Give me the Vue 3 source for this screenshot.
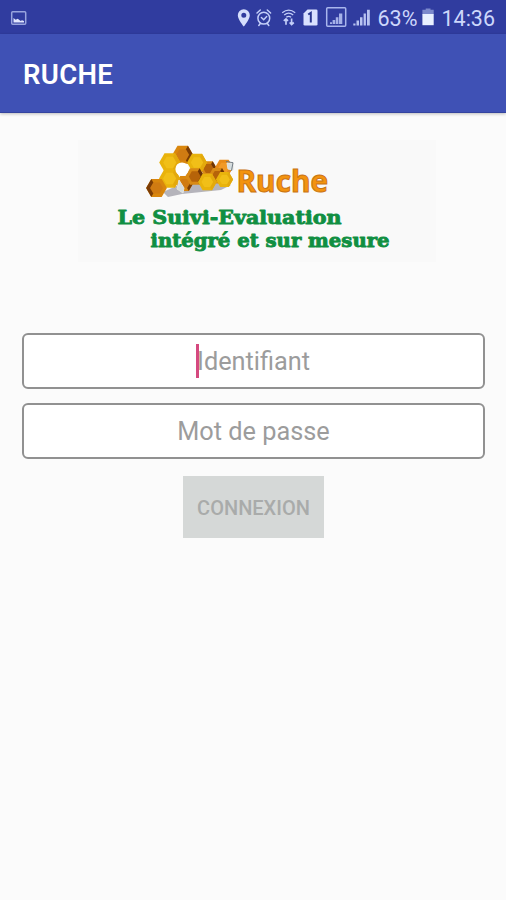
<script setup>
const cells = [
  { x: 208.5, y: 168.5, r: 8.4, tone: 'brown' },
  { x: 182.7, y: 154.8, r: 10.4, tone: 'amber' },
  { x: 197, y: 162.5, r: 10, tone: 'gold' },
  { x: 184.5, y: 183.5, r: 8.6, tone: 'amber' },
  { x: 194.8, y: 176.5, r: 9.6, tone: 'brown' },
  { x: 169.8, y: 162.5, r: 10.6, tone: 'gold' },
  { x: 169.6, y: 178.5, r: 10.6, tone: 'gold' },
  { x: 156.5, y: 188, r: 10.4, tone: 'amber' },
  { x: 224, y: 167.5, r: 9, tone: 'orange' },
  { x: 217.5, y: 175.8, r: 9, tone: 'brown' },
  { x: 207.3, y: 182, r: 9.4, tone: 'gold' },
  { x: 224.5, y: 179.5, r: 8.6, tone: 'gold' }
]
const pt = (c, k, a) => `${c.x + c.r * k * Math.cos(a)},${c.y + c.r * k * Math.sin(a)}`
const hex = (c, k = 1) => [0, 1, 2, 3, 4, 5].map(i => pt(c, k, i * Math.PI / 3)).join(' ')
const facet = (c, from) => [
  pt(c, 0, 0),
  ...[0, 1, 2].map(i => pt(c, 1, (from + i) * Math.PI / 3))
].join(' ')
const facetStart = c => {
  if (c.tone === 'brown') return 5
  return c.x < 160 ? 2 : 5
}
</script>

<template>
  <main class="screen">
    <header>
      <div class="status">
        <svg class="status-art" viewBox="0 0 506 34" fill="none">
          <rect x="11.7" y="11.7" width="14" height="12.6" rx="1" stroke="#98a4de" stroke-width="1.5" />
          <path d="M13.5 22.5V18l2.2 1.8 2-1 3 2.2 1.3-.8 2 .8v1.5z" fill="#e2e7ff" />
          <path fill-rule="evenodd" fill="#d5defc" d="M243.8 9.2a6 6 0 0 1 6 6c0 4.3-6 11.3-6 11.3s-6-7-6-11.3a6 6 0 0 1 6-6zm0 3.5a2.5 2.5 0 1 0 0 5 2.5 2.5 0 0 0 0-5z" />
          <g stroke="#c3cef8" stroke-width="1.5" stroke-linecap="round">
            <circle cx="263.8" cy="18.2" r="5.9" />
            <path d="M257 13l3.3-3M270.6 13l-3.3-3M260.3 23.5l-1.5 2M267.3 23.5l1.5 2M261.4 17.5l2.3 2.2 3-3.2" />
          </g>
          <g stroke="#c3cef8" stroke-width="1.3">
            <path d="M282.2 12.7q6.5-5.3 13 0M284.2 15q4.5-3.8 9 0M286.3 17.3q2.4-2 4.8 0" />
            <path d="M286 18.5v6.3M283.8 20.8l2.2-2 2 2M291.6 18.5v6.3M289.6 22.5l2 2 2.2-2" stroke-width="1.7" />
          </g>
          <path d="M307.5 9.5h8.7q1.3 0 1.3 1.3v13.4q0 1.3-1.3 1.3h-11.4q-1.3 0-1.3-1.3V13.5z" fill="#d9e1ff" />
          <path d="M308.2 14.5l2.6-1.7v9.7" stroke="#28368f" stroke-width="2" />
          <rect x="326.7" y="7.7" width="19" height="18.6" rx="1" stroke="#a9b6ed" stroke-width="1.5" />
          <path fill="#a5b1e8" d="M330 22.2h2v1.8h-2zM332.6 20h2.6v4h-2.6zM335.8 17.2h2.6V24h-2.6zM339 13.5h3.3V24H339z" />
          <path fill="#b8c3f1" d="M353.3 23.5h2.2v2h-2.2zM356.5 20.6h2.5v4.9h-2.5zM360 17.2h2.5v8.3H360zM363.6 13.6h2.3v11.9h-2.3zM367 9.8h2.8v15.7H367z" />
          <path d="M425.7 8.5h4.8v1.2h3.2v4.8h-11.3V9.7h3.3z" fill="#7c89cc" />
          <path d="M422.4 14h11.3v11.2h-11.3z" fill="#e9f0ff" />
          <text x="377.5" y="26.1" textLength="40" lengthAdjust="spacingAndGlyphs">63%</text>
          <text x="441.5" y="26.1" textLength="53.5" lengthAdjust="spacingAndGlyphs">14:36</text>
        </svg>
      </div>
      <div class="appbar"><h1>RUCHE</h1></div>
    </header>

    <svg class="logo" viewBox="78 140 358 122">
      <path class="shade" d="M163 192l18-8 34-2 16 3-10 5-39 4-14 3z" />
      <g v-for="(c, i) in cells" :key="i" :class="c.tone">
        <polygon class="base" :points="hex(c)" />
        <polygon class="dark" :points="facet(c, facetStart(c))" />
        <polygon class="core" :points="hex(c, 0.62)" />
      </g>
      <circle cx="182" cy="169" r="6.6" fill="#fff" />
      <path d="M179 180l5 8-1 5-6-4zM227 163h6v7l-5-1z" fill="#d5dde0" stroke="#e4e4de" stroke-width="1" />
      <path d="M226 161.5l7 1.2-1.5 8" fill="none" stroke="#66717c" stroke-width=".9" />
      <text class="brand" x="236.5" y="192" textLength="91.5" lengthAdjust="spacingAndGlyphs">Ruche</text>
      <text class="tag" x="117.5" y="224" textLength="224" lengthAdjust="spacingAndGlyphs">Le Suivi-Evaluation</text>
      <text class="tag" x="150.5" y="247" textLength="239" lengthAdjust="spacingAndGlyphs">intégré et sur mesure</text>
    </svg>

    <form class="form" @submit.prevent>
      <div class="field"><span class="hint"><i class="caret"></i>Identifiant</span></div>
      <div class="field"><span class="hint">Mot de passe</span></div>
      <button type="button" disabled>CONNEXION</button>
    </form>
  </main>
</template>

<style>
body { background: #fbfbfb; }
</style>

<style scoped>
.screen {
  box-sizing: border-box;
  width: 506px;
  height: 900px;
  overflow: hidden;
  background: #fbfbfb;
  font-family: Roboto, "Liberation Sans", sans-serif;
}
.status { height: 34px; background: #303c9f; }
.status-art { display: block; width: 506px; height: 34px; }
.status-art text { font: 400 22px Roboto, sans-serif; fill: #cdd7fb; }
.appbar {
  box-sizing: border-box;
  height: 79px;
  padding: 3px 23px 0;
  display: flex;
  align-items: center;
  background: #3f51b5;
  border-bottom: 1px solid #34449f;
  box-shadow: 0 1px 3px rgba(0, 0, 0, .25);
}
h1 { margin: 0; font-size: 27.5px; font-weight: 600; line-height: 32px; letter-spacing: .3px; color: #fff; }
.logo { display: block; width: 358px; height: 122px; margin: 27px 0 0 78px; background: #f9f9f9; }
.shade { fill: #b5b4bb; }
.gold .base { fill: #e9b30c; }
.gold .dark { fill: #e3a90c; }
.gold .core { fill: #f1bf18; }
.amber .base { fill: #d9860d; }
.amber .dark { fill: #7c3d05; }
.amber .core { fill: #d07b12; }
.brown .base { fill: #d98a14; }
.brown .dark { fill: #6e3404; }
.brown .core { fill: #b66309; }
.orange .base { fill: #e98b17; }
.orange .dark { fill: #dd8d27; }
.orange .core { fill: #f29a26; }
.brand { font: 700 30px "Open Sans", "Noto Sans", sans-serif; fill: #f3930f; stroke: #c97413; stroke-width: 1px; }
.tag { font: 700 19.3px "DejaVu Serif", serif; fill: #108f42; stroke: #108f42; stroke-width: .9px; stroke-linejoin: round; }
.form { display: flex; flex-direction: column; align-items: center; padding: 71px 21px 0 22px; }
.field {
  box-sizing: border-box;
  width: 463px;
  height: 56px;
  margin-bottom: 14px;
  padding-top: 2px;
  border: 2px solid #919191;
  border-radius: 6px;
  background: #fff;
  display: flex;
  align-items: center;
  justify-content: center;
}
.hint { position: relative; font-size: 25.3px; line-height: 30px; color: #9c9c9c; }
.caret { position: absolute; left: -1px; top: -3px; width: 3px; height: 34px; background: #d5497f; }
button {
  box-sizing: border-box;
  width: 141px;
  height: 62px;
  margin: 3px 0 0;
  padding: 1px 0 0;
  border: 0;
  background: #d5d8d7;
  color: #a9abaa;
  font: 500 20px Roboto, sans-serif;
}
</style>
